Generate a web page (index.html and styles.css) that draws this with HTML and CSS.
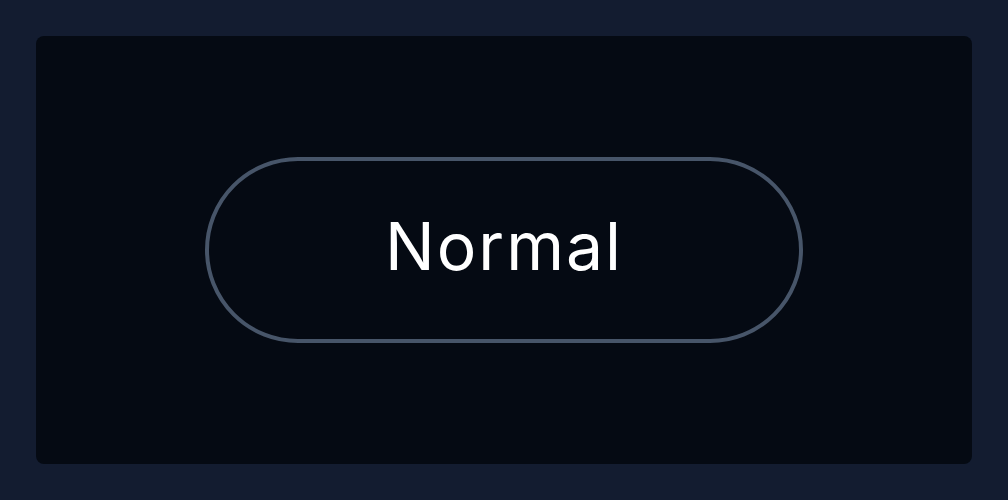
FILE: index.html
```html
<!DOCTYPE html>
<html>
<head>
<meta charset="utf-8">
<link rel="stylesheet" href="styles.css">
</head>
<body>
<div class="card">
  <button class="pill"><span class="label">Normal</span></button>
</div>
</body>
</html>
```
FILE: styles.css
```css
html, body {
  margin: 0;
  height: 100%;
}
body {
  background: #131c30;
  padding: 36px;
  box-sizing: border-box;
}
.card {
  height: 100%;
  background: #050a13;
  border-radius: 8px;
  display: flex;
  align-items: center;
  justify-content: center;
}
.pill {
  width: 598px;
  height: 186px;
  box-sizing: border-box;
  border: 4px solid #475569;
  border-radius: 93px;
  background: transparent;
  color: #ffffff;
  font-family: "Inter", sans-serif;
  font-size: 66px;
  font-weight: 400;
  letter-spacing: 2px;
  padding: 0 0 8px 0;
}
```
